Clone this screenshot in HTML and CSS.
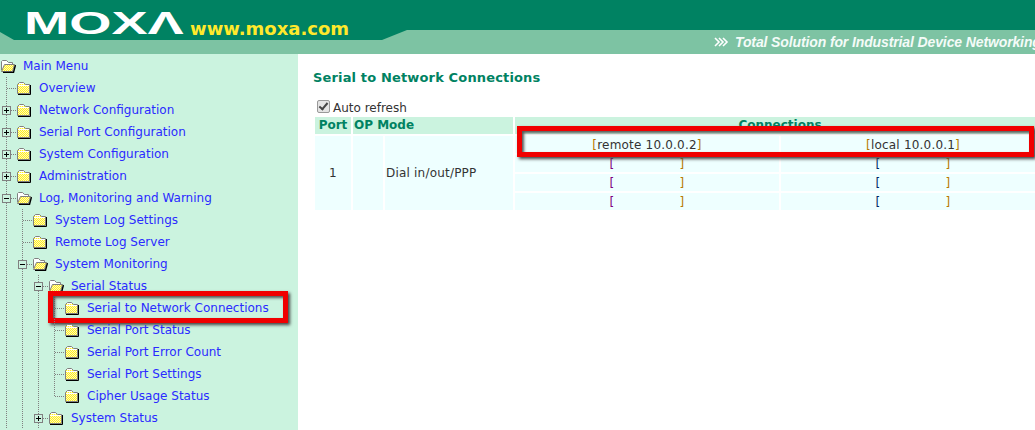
FILE: index.html
```html
<!DOCTYPE html>
<html lang="en">
<head>
    <meta charset="UTF-8">
    <title>Serial to Network Connections</title>
    <link rel="stylesheet" href="styles.css">
</head>
<body>
    <svg class="defs" width="0" height="0">
        <defs>
            <pattern id="dither" width="2" height="2" patternUnits="userSpaceOnUse">
                <rect width="2" height="2" fill="#ffee22"/>
                <rect width="1" height="1" fill="#fffab8"/>
                <rect x="1" y="1" width="1" height="1" fill="#fffab8"/>
            </pattern>
            <symbol id="folder" viewBox="0 0 16 14">
                <path d="M1.5 12.5V3.5L3.5 1.5H7.5L9.5 3.5H13.5V12.5Z" fill="url(#dither)" stroke="#808080"/>
                <path d="M2 4H13V5H2ZM3 2H8V3H3Z" fill="#fff"/>
                <path d="M14.5 4V13.5H2" fill="none" stroke="#000"/>
            </symbol>
            <symbol id="folder-open" viewBox="0 0 16 14">
                <path d="M1.5 11V2.5L2.5 1.5H6.5L8.5 3.5H12.5V5.5" fill="#fff" stroke="#808080"/>
                <path d="M1.5 12.5L4.5 5.5H14.5L12.5 12.5Z" fill="url(#dither)" stroke="#808080"/>
                <path d="M15.5 6L13.5 13.5H3" fill="none" stroke="#000" stroke-width="1.4"/>
            </symbol>
        </defs>
    </svg>

    <div class="top">
        <div class="brand">
            <span class="logo" aria-label="MOXA">MOXΛ</span>
            <span class="site">www.moxa.com</span>
        </div>
        <div class="tagline">
            <svg class="chevrons" width="15" height="10" viewBox="0 0 15 10">
                <path d="M1 1L5 5L1 9M5 1L9 5L5 9M9 1L13 5L9 9" fill="none" stroke="#fff" stroke-width="1.6"/>
            </svg>
            <span>Total Solution for Industrial Device Networking</span>
        </div>
    </div>

    <div class="page">
        <div class="menu">
            <div class="row">
                <svg class="icon"><use href="#folder-open"/></svg><a class="label">Main Menu</a>
            </div>
            <div class="row">
                <span class="cell tee"></span>
                <svg class="icon"><use href="#folder"/></svg><a class="label">Overview</a>
            </div>
            <div class="row">
                <span class="cell tee"><i class="box plus"></i></span>
                <svg class="icon"><use href="#folder"/></svg><a class="label">Network Configuration</a>
            </div>
            <div class="row">
                <span class="cell tee"><i class="box plus"></i></span>
                <svg class="icon"><use href="#folder"/></svg><a class="label">Serial Port Configuration</a>
            </div>
            <div class="row">
                <span class="cell tee"><i class="box plus"></i></span>
                <svg class="icon"><use href="#folder"/></svg><a class="label">System Configuration</a>
            </div>
            <div class="row">
                <span class="cell tee"><i class="box plus"></i></span>
                <svg class="icon"><use href="#folder"/></svg><a class="label">Administration</a>
            </div>
            <div class="row">
                <span class="cell tee"><i class="box minus"></i></span>
                <svg class="icon"><use href="#folder-open"/></svg><a class="label">Log, Monitoring and Warning</a>
            </div>
            <div class="row">
                <span class="cell line"></span><span class="cell tee"></span>
                <svg class="icon"><use href="#folder"/></svg><a class="label">System Log Settings</a>
            </div>
            <div class="row">
                <span class="cell line"></span><span class="cell tee"></span>
                <svg class="icon"><use href="#folder"/></svg><a class="label">Remote Log Server</a>
            </div>
            <div class="row">
                <span class="cell line"></span><span class="cell tee"><i class="box minus"></i></span>
                <svg class="icon"><use href="#folder-open"/></svg><a class="label">System Monitoring</a>
            </div>
            <div class="row">
                <span class="cell line"></span><span class="cell line"></span><span class="cell tee"><i class="box minus"></i></span>
                <svg class="icon"><use href="#folder-open"/></svg><a class="label">Serial Status</a>
            </div>
            <div class="row">
                <span class="cell line"></span><span class="cell line"></span><span class="cell line"></span><span class="cell tee"></span>
                <svg class="icon"><use href="#folder"/></svg><a class="label">Serial to Network Connections</a>
                <div class="mark menu-mark"></div>
            </div>
            <div class="row">
                <span class="cell line"></span><span class="cell line"></span><span class="cell line"></span><span class="cell tee"></span>
                <svg class="icon"><use href="#folder"/></svg><a class="label">Serial Port Status</a>
            </div>
            <div class="row">
                <span class="cell line"></span><span class="cell line"></span><span class="cell line"></span><span class="cell tee"></span>
                <svg class="icon"><use href="#folder"/></svg><a class="label">Serial Port Error Count</a>
            </div>
            <div class="row">
                <span class="cell line"></span><span class="cell line"></span><span class="cell line"></span><span class="cell tee"></span>
                <svg class="icon"><use href="#folder"/></svg><a class="label">Serial Port Settings</a>
            </div>
            <div class="row">
                <span class="cell line"></span><span class="cell line"></span><span class="cell line"></span><span class="cell elbow"></span>
                <svg class="icon"><use href="#folder"/></svg><a class="label">Cipher Usage Status</a>
            </div>
            <div class="row">
                <span class="cell line"></span><span class="cell line"></span><span class="cell tee"><i class="box plus"></i></span>
                <svg class="icon"><use href="#folder"/></svg><a class="label">System Status</a>
            </div>
        </div>

        <div class="content">
            <h2 class="title">Serial to Network Connections</h2>
            <label class="refresh"><input type="checkbox" checked disabled>Auto refresh</label>
            <div class="table-wrap">
                <table class="conn">
                    <colgroup>
                        <col class="c-port"><col class="c-gap"><col class="c-mode"><col class="c-peer"><col class="c-peer">
                    </colgroup>
                    <tr>
                        <th>Port</th>
                        <th colspan="2" class="left">OP Mode</th>
                        <th colspan="2">Connections</th>
                    </tr>
                    <tr>
                        <td rowspan="4">1</td>
                        <td rowspan="4"></td>
                        <td rowspan="4" class="left">Dial in/out/PPP</td>
                        <td><span class="br-o">[</span>remote 10.0.0.2<span class="br-o">]</span></td>
                        <td><span class="br-o">[</span>local 10.0.0.1<span class="br-o">]</span></td>
                    </tr>
                    <tr>
                        <td><div class="empty"><span class="br-p">[</span><span class="br-o">]</span></div></td>
                        <td><div class="empty"><span class="br-b">[</span><span class="br-o">]</span></div></td>
                    </tr>
                    <tr>
                        <td><div class="empty"><span class="br-p">[</span><span class="br-o">]</span></div></td>
                        <td><div class="empty"><span class="br-b">[</span><span class="br-o">]</span></div></td>
                    </tr>
                    <tr>
                        <td><div class="empty"><span class="br-p">[</span><span class="br-o">]</span></div></td>
                        <td><div class="empty"><span class="br-b">[</span><span class="br-o">]</span></div></td>
                    </tr>
                </table>
                <div class="mark table-mark"></div>
            </div>
        </div>
    </div>
</body>
</html>
```
FILE: styles.css
```css
html, body {
    margin: 0;
    height: 430px;
    overflow: hidden;
    background: white;
}
body {
    font-family: "DejaVu Sans", Verdana, sans-serif;
    font-size: 12px;
    color: #333;
}
.defs {
    display: block;
    height: 0;
}

/* header */
.top {
    position: relative;
    height: 54px;
    background-color: #7dc3a3;
}
.top::before {
    content: "";
    position: absolute;
    inset: 0;
    background-color: #008262;
    clip-path: polygon(0 0, 100% 0, 100% 30px, 407px 30px, 382px 40px, 14px 40px, 0 32px);
}
.brand {
    position: relative;
    display: flex;
    align-items: baseline;
    height: 30px;
    padding-left: 24px;
}
.logo {
    font-family: "Liberation Sans", Arial, sans-serif;
    font-weight: bold;
    font-size: 31px;
    line-height: 50px;
    color: white;
    display: inline-block;
    width: 166px;
    transform: translateY(-1px) scaleX(1.75);
    transform-origin: left;
}
.site {
    font-family: "DejaVu Sans", Verdana, sans-serif;
    font-weight: bold;
    font-size: 18px;
    color: #ffe92b;
}
.tagline {
    position: relative;
    display: flex;
    align-items: center;
    gap: 6px;
    height: 24px;
    padding-left: 714px;
    font-family: "Liberation Sans", Arial, sans-serif;
    font-weight: bold;
    font-style: italic;
    font-size: 14px;
    letter-spacing: -0.12px;
    color: #f4fbf8;
    white-space: nowrap;
}
.chevrons {
    flex: none;
}

/* layout */
.page {
    display: flex;
}
.menu {
    flex: none;
    width: 298px;
    height: 375px;
    padding-top: 1px;
    background-color: #cbf3df;
}
.content {
    flex: none;
    width: 722px;
    padding-left: 15px;
}

/* tree */
.row {
    position: relative;
    display: flex;
    align-items: center;
    height: 22px;
    white-space: nowrap;
}
.cell {
    position: relative;
    flex: none;
    width: 16px;
    height: 22px;
}
.line, .tee, .elbow {
    background-image:
        repeating-linear-gradient(to bottom, #808080 0 1px, transparent 1px 2px);
    background-size: 1px 100%;
    background-position: 6px 0;
    background-repeat: no-repeat;
}
.elbow {
    background-size: 1px 11px;
}
.tee::after, .elbow::after {
    content: "";
    position: absolute;
    left: 7px;
    top: 11px;
    width: 9px;
    border-top: 1px dotted #808080;
}
.box {
    position: absolute;
    z-index: 1;
    left: 2px;
    top: 7px;
    width: 7px;
    height: 7px;
    border: 1px solid #808080;
    background-color: #cbf3df;
}
.box::before {
    content: "";
    position: absolute;
    left: 1px;
    top: 3px;
    width: 5px;
    height: 1px;
    background-color: black;
}
.plus::after {
    content: "";
    position: absolute;
    left: 3px;
    top: 1px;
    width: 1px;
    height: 5px;
    background-color: black;
}
.icon {
    flex: none;
    width: 16px;
    height: 14px;
}
.label {
    margin-left: 7px;
    color: #2a2aff;
}

/* red highlight */
.mark {
    position: absolute;
    box-sizing: border-box;
    border: 5px solid #f00000;
    box-shadow: 2px 2px 3px #444, inset 2px 2px 3px #555;
}
.menu-mark {
    left: 48px;
    top: -6px;
    width: 240px;
    height: 32px;
}
.table-mark {
    left: 204px;
    top: 11px;
    width: 517px;
    height: 31px;
}

/* content */
.title {
    margin: 0;
    padding-top: 16px;
    height: 25px;
    font-size: 13px;
    line-height: 15px;
    letter-spacing: 0.15px;
    color: #008262;
}
.refresh {
    display: flex;
    align-items: center;
    height: 18px;
    margin-top: 4px;
    padding-left: 4px;
}
.refresh input {
    appearance: none;
    position: relative;
    box-sizing: border-box;
    width: 13px;
    height: 13px;
    margin: 0 3px 4px 0;
    border: 1px solid #999;
    border-radius: 2px;
    background-color: #e4e4e4;
}
.refresh input::after {
    content: "";
    position: absolute;
    left: 3px;
    top: 0;
    width: 3px;
    height: 7px;
    border: solid #444;
    border-width: 0 2px 2px 0;
    transform: rotate(40deg);
}
.table-wrap {
    position: relative;
}
.conn {
    table-layout: fixed;
    width: 732px;
    border-collapse: separate;
    border-spacing: 2px;
    margin-top: -2px;
}
.c-port { width: 36px; }
.c-gap { width: 30px; }
.c-mode { width: 128px; }
.c-peer { width: 264px; }
.conn th {
    height: 17px;
    padding: 0 1px;
    background-color: #cbf3df;
    color: #008262;
    font-size: 12px;
    line-height: 17px;
    overflow: hidden;
}
.conn th.left {
    text-align: left;
}
.conn td {
    height: 16px;
    padding: 1px 0 0;
    background-color: #eeffff;
    text-align: center;
    line-height: 16px;
    letter-spacing: 0.2px;
}
.conn td[rowspan] {
    padding: 0 0 1px;
}
.conn td.left {
    text-align: left;
    padding-left: 1px;
}
.empty {
    display: flex;
    justify-content: space-between;
    width: 75px;
    margin: 0 auto;
}
.br-o { color: #b87a00; }
.br-p { color: #800080; }
.br-b { color: #002a66; }
```
